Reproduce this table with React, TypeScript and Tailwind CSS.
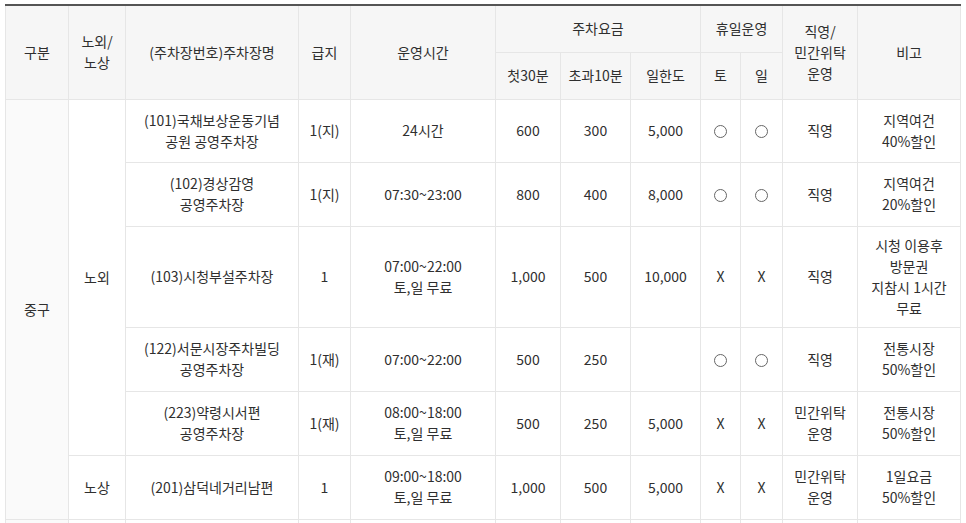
import React from 'react';

type Row = {
  name: React.ReactNode;
  grade: string;
  hours: React.ReactNode;
  first: string;
  extra: string;
  daily: string;
  sat: string;
  sun: string;
  op: React.ReactNode;
  note: React.ReactNode;
  h: string;
};

// 휴일운영 가능 표시 (동그라미)
const O = (
  <span className="inline-block w-[13px] h-[13px] rounded-full border border-[#666] align-[-2px]" />
);

const rows: Row[] = [
  {
    name: <>(101)국채보상운동기념<br />공원 공영주차장</>,
    grade: '1(지)',
    hours: '24시간',
    first: '600',
    extra: '300',
    daily: '5,000',
    sat: 'o',
    sun: 'o',
    op: '직영',
    note: <>지역여건<br />40%할인</>,
    h: 'h-[63px]',
  },
  {
    name: <>(102)경상감영<br />공영주차장</>,
    grade: '1(지)',
    hours: '07:30~23:00',
    first: '800',
    extra: '400',
    daily: '8,000',
    sat: 'o',
    sun: 'o',
    op: '직영',
    note: <>지역여건<br />20%할인</>,
    h: 'h-[64px]',
  },
  {
    name: '(103)시청부설주차장',
    grade: '1',
    hours: <>07:00~22:00<br />토,일 무료</>,
    first: '1,000',
    extra: '500',
    daily: '10,000',
    sat: 'X',
    sun: 'X',
    op: '직영',
    note: <>시청 이용후<br />방문권<br />지참시 1시간<br />무료</>,
    h: 'h-[101px]',
  },
  {
    name: <>(122)서문시장주차빌딩<br />공영주차장</>,
    grade: '1(재)',
    hours: '07:00~22:00',
    first: '500',
    extra: '250',
    daily: '',
    sat: 'o',
    sun: 'o',
    op: '직영',
    note: <>전통시장<br />50%할인</>,
    h: 'h-[64px]',
  },
  {
    name: <>(223)약령시서편<br />공영주차장</>,
    grade: '1(재)',
    hours: <>08:00~18:00<br />토,일 무료</>,
    first: '500',
    extra: '250',
    daily: '5,000',
    sat: 'X',
    sun: 'X',
    op: <>민간위탁<br />운영</>,
    note: <>전통시장<br />50%할인</>,
    h: 'h-[64px]',
  },
];

const td = 'border border-[#e6e6e6] text-center align-middle px-1';
const th = 'border border-[#e6e6e6] bg-[#f6f6f6] text-center align-middle font-normal px-1';

const mark = (v: string) => (v === 'o' ? O : v);

export default function App() {
  return (
    <div className="bg-white pt-[4px] pl-[5px] w-[966px] h-[523px] overflow-hidden">
      <table
        className="table-fixed border-collapse w-[955px] text-[14px] leading-[21px] text-[#2f2f2f] border-t-2 border-t-[#555]"
        style={{ fontFamily: '"Noto Sans CJK KR", "Noto Sans", sans-serif' }}
      >
        <colgroup>
          <col className="w-[63px]" />
          <col className="w-[57px]" />
          <col className="w-[173px]" />
          <col className="w-[52px]" />
          <col className="w-[145px]" />
          <col className="w-[65px]" />
          <col className="w-[70px]" />
          <col className="w-[70px]" />
          <col className="w-[40px]" />
          <col className="w-[42px]" />
          <col className="w-[75px]" />
          <col className="w-[103px]" />
        </colgroup>
        <thead>
          <tr className="h-[47px]">
            <th rowSpan={2} className={th}>구분</th>
            <th rowSpan={2} className={th}>노외/<br />노상</th>
            <th rowSpan={2} className={th}>(주차장번호)주차장명</th>
            <th rowSpan={2} className={th}>급지</th>
            <th rowSpan={2} className={th}>운영시간</th>
            <th colSpan={3} className={th}>주차요금</th>
            <th colSpan={2} className={th}>휴일운영</th>
            <th rowSpan={2} className={th}>직영/<br />민간위탁<br />운영</th>
            <th rowSpan={2} className={th}>비고</th>
          </tr>
          <tr className="h-[47px]">
            <th className={th}>첫30분</th>
            <th className={th}>초과10분</th>
            <th className={th}>일한도</th>
            <th className={th}>토</th>
            <th className={th}>일</th>
          </tr>
        </thead>
        <tbody>
          {rows.map((r, i) => (
            <tr key={i} className={r.h}>
              {i === 0 && (
                <>
                  <td rowSpan={6} className={`${td} bg-[#fafafa]`}>중구</td>
                  <td rowSpan={5} className={td}>노외</td>
                </>
              )}
              <td className={td}>{r.name}</td>
              <td className={td}>{r.grade}</td>
              <td className={td}>{r.hours}</td>
              <td className={td}>{r.first}</td>
              <td className={td}>{r.extra}</td>
              <td className={td}>{r.daily}</td>
              <td className={td}>{mark(r.sat)}</td>
              <td className={td}>{mark(r.sun)}</td>
              <td className={td}>{r.op}</td>
              <td className={td}>{r.note}</td>
            </tr>
          ))}
          <tr className="h-[64px]">
            <td className={td}>노상</td>
            <td className={td}>(201)삼덕네거리남편</td>
            <td className={td}>1</td>
            <td className={td}>09:00~18:00<br />토,일 무료</td>
            <td className={td}>1,000</td>
            <td className={td}>500</td>
            <td className={td}>5,000</td>
            <td className={td}>X</td>
            <td className={td}>X</td>
            <td className={td}>민간위탁<br />운영</td>
            <td className={td}>1일요금<br />50%할인</td>
          </tr>
          <tr className="h-[40px]">
            <td className={`${td} bg-[#fafafa]`}></td>
            <td className={td}></td>
            <td className={td}></td>
            <td className={td}></td>
            <td className={td}></td>
            <td className={td}></td>
            <td className={td}></td>
            <td className={td}></td>
            <td className={td}></td>
            <td className={td}></td>
            <td className={td}></td>
            <td className={td}></td>
          </tr>
        </tbody>
      </table>
    </div>
  );
}
